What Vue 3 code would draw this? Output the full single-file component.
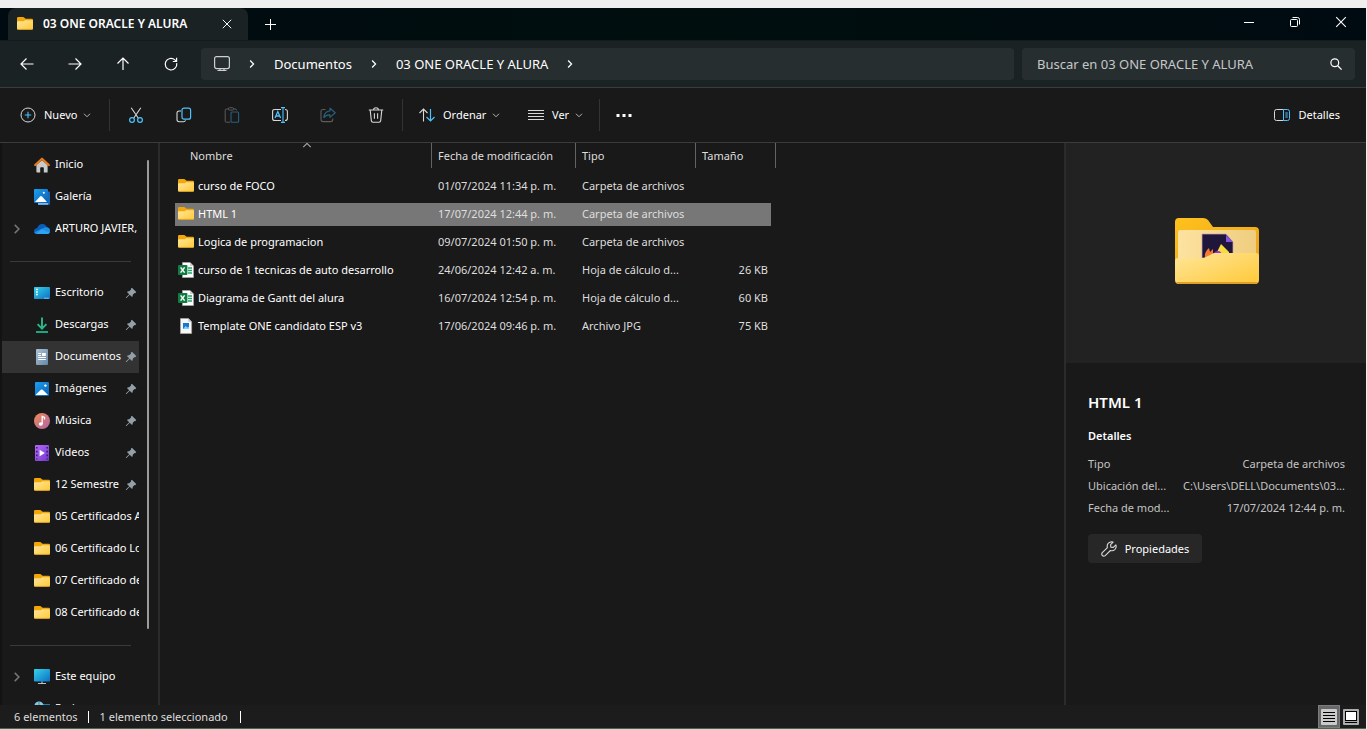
<script setup>
import { ref } from 'vue'

const folder =
  '<path d="M0 2.200Q0 1 1.200 1H6Q6.800 1 7.400 1.700L8.600 2.800H14.800Q16 2.800 16 4V8.500H0Z" fill="#f2a60b"/>' +
  '<path d="M0 6Q0 5.200.8 5.200H6.200Q6.900 5.200 7.400 4.700L8 4.300H15.200Q16 4.300 16 5.100V12.600Q16 13.700 14.900 13.700H1.100Q0 13.700 0 12.600Z" fill="url(#gFolder)"/>' +
  '<path d="M.4 13.400H15.600" stroke="#d79a1c" stroke-width=".8"/>'

const picture = '<path d="M1.500 14 6.800 8.800Q7.800 8 8.700 8.800L14 14Z" fill="#fff"/><circle cx="11.400" cy="4.600" r="1.200" fill="#fff"/>'

const excel =
  '<path d="M4.500.5H12L15.500 4V15.500H4.500Z" fill="#fff" stroke="#a5a5a5" stroke-width=".8"/><path d="M12 .5V4H15.500Z" fill="#cfcfcf"/>' +
  '<path d="M10 6h4M10 8.500h4M10 11h4" stroke="#21a366" stroke-width="1.400"/>' +
  '<rect x="0" y="3" width="9.400" height="10" rx=".8" fill="#107c41"/><path d="M2.600 5.400 6.600 10.600M6.600 5.400 2.600 10.600" stroke="#fff" stroke-width="1.500"/>'

const icons = {
  folder,
  excel,
  home:
    '<path d="M2.4 8 8 3.2 13.6 8V15.6H9.8V11Q9.8 10.2 9 10.2H7Q6.2 10.2 6.2 11V15.6H3.2Q2.4 15.6 2.4 14.8Z" fill="#c9c9c9"/>' +
    '<path d="M1.2 8 8 1.700 14.8 8" fill="none" stroke="#e8791c" stroke-width="2.200" stroke-linecap="round" stroke-linejoin="round"/>',
  gallery:
    '<path d="M14 2.5H15.4Q16 2.5 16 3.4V14.4Q16 16 14.4 16H4V14H14Z" fill="#1767b5"/><path d="M4 14H14V15.8H4Z" fill="#7cb5e6"/>' +
    '<rect width="14" height="14" rx="1" fill="url(#gBlue)"/><path d="M1 13 6 7.4Q7 6.6 8 7.4L13 13Z" fill="#fff"/><circle cx="9.8" cy="3.8" r="1" fill="#fff"/>',
  cloud:
    '<path d="M3 7.3Q4.6 3 8.4 3 11.4 3 12.9 6.3 16 7 16 10 16 13 13 13H3.2Q0 13 0 10 0 7.8 3 7.3Z" fill="#0a5eb8"/>' +
    '<path d="M.2 11.2 8.5 7.4Q10.5 6.4 12.9 6.3 16 7 16 10 16 13 13 13H3.2Q.8 13 .2 11.2Z" fill="#1f8fe6"/>' +
    '<path d="M2.2 12.9 7.4 8.3 15.6 11.6Q14.8 13 13 13Z" fill="#2ba5f4"/>',
  desktop:
    '<rect y="2" width="16" height="12" rx=".8" fill="url(#gCyan)"/><path d="M2 4.6h1.8M2 7.1h1.8M2 9.6h1.8" stroke="#fff" stroke-width="1.5"/><path d="M10.5 13.2h4.6" stroke="#d9edff" stroke-width="1" stroke-dasharray="1.2 .8"/>',
  download:
    '<path d="M8 .5V11M3.6 7.2 8 11.6 12.4 7.2" fill="none" stroke="#2ab98a" stroke-width="1.9"/><path d="M2 15h12" stroke="#17b890" stroke-width="1.8"/>',
  document:
    '<rect x="2" width="12" height="16" rx="1" fill="url(#gDoc)"/><path d="M4.2 4.5H7M4.2 6.5H7M4.2 8.5H11.8M4.2 10.500H11.800" stroke="#fff" stroke-width="1.100"/><rect x="8" y="4" width="3.8" height="3" fill="#fff"/>',
  image: '<rect x="1" y="1" width="14" height="14" rx="1" fill="url(#gBlue)"/>' + picture,
  music:
    '<circle cx="8" cy="8" r="8" fill="url(#gMusic)"/><ellipse cx="6.8" cy="11" rx="2" ry="1.8" fill="#fff"/><path d="M8.200 11V3.500L10.500 4.500V6.500" fill="none" stroke="#fff" stroke-width="1.300"/>',
  video:
    '<rect x="1" width="14" height="16" rx="1" fill="url(#gVideo)"/><path d="M2.8 2v12.6M13.2 2v12.6" stroke="#40197c" stroke-width="1.6" stroke-dasharray="1.6 2.2"/><path d="M5.6 4.8V11.2L10.8 8Z" fill="#fff"/>',
  computer:
    '<rect y="0" width="16" height="12.500" rx=".8" fill="url(#gCyan)"/><path d="M8 12.500v2M4 14.500h8" stroke="#b8c4cc" stroke-width="1.200"/>',
  network:
    '<rect x="3" y="3" width="13" height="10" fill="#1b7fb8"/><circle cx="5" cy="5" r="4.6" fill="#8cc8de"/><path d="M1 4.6h8M5 .5v9" stroke="#3a88ad"/>',
  jpg:
    '<path d="M2.5.5H10.4L13.6 3.8V15.5H2.5Z" fill="#f7f7f7" stroke="#a5a5a5" stroke-width=".8"/><path d="M10.4.5V3.8H13.6Z" fill="#c5c5c5"/><rect x="5" y="5" width="6" height="6" fill="#1976d2"/><path d="M5 11 7.6 8 9.4 9.6 11 8.8V11Z" fill="#7fd0f5"/>',
  pin: '<path d="M9.2 1 15 6.8 13.6 8.2 12.8 7.9 10.3 10.4Q10.6 12 9.4 13.4L6.3 10.3 2 14.6 1 14.8 1.4 13.8 5.6 9.6 2.6 6.6Q4 5.4 5.6 5.7L8.1 3.2 7.8 2.4Z" fill="#94a0a8"/>',
  chevron: '<path d="M5 2.500 10.500 8 5 13.500" fill="none" stroke="currentColor" stroke-width="2"/>',
  down: '<path d="M2 5.500 8 11.500 14 5.500" fill="none" stroke="currentColor" stroke-width="2"/>',
  up: '<path d="M2 11.500 8 5.500 14 11.500" fill="none" stroke="currentColor" stroke-width="1.800"/>',
  back: '<path d="M14.5 8H2M7.5 2.5 2 8 7.5 13.5" fill="none" stroke="currentColor" stroke-width="1.2"/>',
  forward: '<path d="M1.5 8H14M8.5 2.5 14 8 8.5 13.5" fill="none" stroke="currentColor" stroke-width="1.2"/>',
  upward: '<path d="M8 14V2M2.5 7.5 8 2 13.5 7.5" fill="none" stroke="currentColor" stroke-width="1.2"/>',
  refresh: '<path d="M13.7 7.2A5.8 5.8 0 1 1 11.9 3.9L13.5 5.4M13.6 1.8V5.5H9.8" fill="none" stroke="currentColor" stroke-width="1.2"/>',
  monitor: '<rect x=".6" y=".6" width="14.800" height="12" rx="2" fill="none" stroke="currentColor" stroke-width="1.200"/><path d="M6 12.500V14.500M10 12.500V14.500M3.500 14.500H12.500" stroke="currentColor" stroke-width="1.200"/>',
  close: '<path d="M3.2 3.2 12.8 12.8M12.8 3.2 3.2 12.8" stroke="currentColor" stroke-width="1.1"/>',
  plus: '<path d="M8.500 3V14M3 8.500H14" stroke="currentColor"/>',
  minimize: '<path d="M3 8.5H13" stroke="currentColor"/>',
  restore: '<rect x="3.5" y="5.5" width="7" height="7" rx="1" fill="none" stroke="currentColor"/><path d="M5.5 3.5H10.5Q12.5 3.5 12.5 5.5V10.5" fill="none" stroke="currentColor"/>',
  search: '<circle cx="6.8" cy="6.8" r="3.9" fill="none" stroke="currentColor" stroke-width="1.2"/><path d="M9.7 9.7 13.6 13.6" stroke="currentColor" stroke-width="1.3"/>',
  add: '<circle cx="8" cy="8" r="7" fill="none" stroke="#d8d8d8"/><path d="M8 4.8V11.2M4.8 8H11.2" stroke="#4cc2ff" stroke-width="1.1"/>',
  cut: '<path d="M3.2.8 10.2 11M12.8.8 5.8 11" stroke="#d8d8d8" stroke-width="1.1"/><circle cx="4" cy="13" r="2.4" fill="none" stroke="#4cc2ff" stroke-width="1.2"/><circle cx="12" cy="13" r="2.4" fill="none" stroke="#4cc2ff" stroke-width="1.2"/>',
  copy: '<path d="M5 4H3.2Q1 4 1 6.2V12.6Q1 14.8 3.2 14.8H7.4Q9 14.8 9.6 13.4" fill="none" stroke="#d8d8d8" stroke-width="1.1"/><rect x="6" y="1.2" width="8.6" height="11" rx="2" fill="none" stroke="#4cc2ff" stroke-width="1.2"/>',
  paste: '<path d="M4.5 2H2.4Q1.2 2 1.2 3.2V14Q1.2 15.2 2.4 15.2H6M9.5 2H11.4Q12.6 2 12.6 3.4" fill="none" stroke="#5c5c5c"/><rect x="4.4" y=".7" width="5.2" height="2.4" rx="1.2" fill="none" stroke="#5c5c5c"/><rect x="7" y="5" width="7.6" height="10.2" rx="1" fill="none" stroke="#28607c" stroke-width="1.1"/>',
  rename: '<path d="M9 2.5H2.6Q.6 2.5 .6 4.5V11.5Q.6 13.5 2.6 13.5H9M13 2.5Q15.4 2.5 15.4 4.5V11.5Q15.4 13.5 13 13.5" fill="none" stroke="#d8d8d8" stroke-width="1.1"/><path d="M3 11 5.8 4.6 8.6 11M4 9H7.6" fill="none" stroke="#4cc2ff" stroke-width="1.3"/><path d="M9 .6H13M11 .6V15.4M9 15.4H13" stroke="#4cc2ff" stroke-width="1.1"/>',
  share: '<path d="M5.5 2.5H3Q1 2.5 1 4.5V12.6Q1 14.6 3 14.6H10.8Q12.8 14.6 12.8 12.6V11.5" fill="none" stroke="#5c5c5c" stroke-width="1.1"/><path d="M10 1.2 15.2 5.8 10 10.4V7.8Q6 7.6 3.8 10.6 4.4 4.4 10 3.8Z" fill="none" stroke="#28607c" stroke-width="1.2" stroke-linejoin="round"/>',
  trash: '<path d="M.8 3H15.2M5.6 3Q5.6 .8 8 .8 10.4 .8 10.4 3M2.2 3 3.3 13.6Q3.5 15.2 5 15.2H11Q12.5 15.2 12.7 13.6L13.8 3M6.4 6.3V11.7M9.6 6.3V11.7" fill="none" stroke="#d8d8d8" stroke-width="1.1"/>',
  sort: '<path d="M4.5 14.5V2M.5 6 4.5 2 8.5 6" fill="none" stroke="#d8d8d8" stroke-width="1.1"/><path d="M11.5 2V14M7.5 10 11.5 14 15.5 10" fill="none" stroke="#4cc2ff" stroke-width="1.2"/>',
  lines: '<path d="M0 3.5H16M0 6.5H16M0 9.5H16M0 12.5H16" stroke="#d8d8d8"/>',
  dots: '<path d="M.5 7h3v3h-3zM6.500 7h3v3h-3zM12.500 7h3v3h-3z" fill="#fff"/>',
  pane: '<path d="M9.5 2.5H2.5Q.5 2.5 .5 4.5V11.5Q.5 13.5 2.5 13.5H9.5" fill="none" stroke="#d8d8d8"/><path d="M9.5 2.5H13.5Q15.5 2.5 15.5 4.5V11.5Q15.5 13.5 13.5 13.5H9.5ZM11.3 6H13.8M11.3 8H13.8M11.3 10H13.8" fill="none" stroke="#4cc2ff"/>',
  wrench: '<path d="M14.9 3.9 12.4 6.4 9.8 6.2 9.6 3.6 12.1 1.1Q9.4.2 7.4 2.2 5.6 4.2 6.4 6.6L1.3 11.7Q.2 13 1.3 14.5 2.8 15.8 4.2 14.6L9.4 9.5Q11.8 10.4 13.8 8.6 15.8 6.6 14.9 3.9Z" fill="none" stroke="#d8d8d8" stroke-width="1.1" stroke-linejoin="round"/>',
  viewList: '<rect width="16" height="16" rx="1" fill="#c8cacb"/><path d="M2 3.5H14M2 6.5H14M2 9.5H14M2 12.5H14" stroke="#000"/>',
  viewLarge: '<rect width="16" height="16" rx="1" fill="#adadad"/><rect x="2.5" y="2.5" width="11" height="9" fill="#fff" stroke="#000"/><path d="M2 13.5H14" stroke="#000"/>',
}

const selectedRow = ref('HTML 1')

const sidebar = [
  { icon: 'home', label: 'Inicio' },
  { icon: 'gallery', label: 'Galería' },
  { icon: 'cloud', label: 'ARTURO JAVIER, Personal', expand: true },
  { divider: true },
  { icon: 'desktop', label: 'Escritorio', pin: true },
  { icon: 'download', label: 'Descargas', pin: true },
  { icon: 'document', label: 'Documentos', pin: true, active: true },
  { icon: 'image', label: 'Imágenes', pin: true },
  { icon: 'music', label: 'Música', pin: true },
  { icon: 'video', label: 'Videos', pin: true },
  { icon: 'folder', label: '12 Semestre', pin: true },
  { icon: 'folder', label: '05 Certificados Alura' },
  { icon: 'folder', label: '06 Certificado Logica' },
  { icon: 'folder', label: '07 Certificado de' },
  { icon: 'folder', label: '08 Certificado de' },
  { divider: true },
  { icon: 'computer', label: 'Este equipo', expand: true },
  { icon: 'network', label: 'Red' },
]

const files = [
  { icon: 'folder', name: 'curso de FOCO', date: '01/07/2024 11:34 p. m.', type: 'Carpeta de archivos', size: '' },
  { icon: 'folder', name: 'HTML 1', date: '17/07/2024 12:44 p. m.', type: 'Carpeta de archivos', size: '' },
  { icon: 'folder', name: 'Logica de programacion', date: '09/07/2024 01:50 p. m.', type: 'Carpeta de archivos', size: '' },
  { icon: 'excel', name: 'curso de 1 tecnicas de auto desarrollo', date: '24/06/2024 12:42 a. m.', type: 'Hoja de cálculo d...', size: '26 KB' },
  { icon: 'excel', name: 'Diagrama de Gantt del alura', date: '16/07/2024 12:54 p. m.', type: 'Hoja de cálculo d...', size: '60 KB' },
  { icon: 'jpg', name: 'Template ONE candidato ESP v3', date: '17/06/2024 09:46 p. m.', type: 'Archivo JPG', size: '75 KB' },
]

const navButtons = [
  { icon: 'back', label: 'Atrás' },
  { icon: 'forward', label: 'Adelante' },
  { icon: 'upward', label: 'Subir' },
  { icon: 'refresh', label: 'Actualizar' },
]

const tools = [
  { icon: 'cut', label: 'Cortar' },
  { icon: 'copy', label: 'Copiar' },
  { icon: 'paste', label: 'Pegar' },
  { icon: 'rename', label: 'Cambiar nombre' },
  { icon: 'share', label: 'Compartir' },
  { icon: 'trash', label: 'Eliminar' },
]

const details = [
  { label: 'Tipo', value: 'Carpeta de archivos' },
  { label: 'Ubicación del...', value: 'C:\\Users\\DELL\\Documents\\03...' },
  { label: 'Fecha de mod...', value: '17/07/2024 12:44 p. m.' },
]
</script>

<template>
  <div class="screen">
    <svg class="defs" aria-hidden="true">
      <defs>
        <linearGradient id="gFolder" x1="0" y1="0" x2="1" y2="1"><stop offset="0" stop-color="#ffe69a" /><stop offset="1" stop-color="#ffc938" /></linearGradient>
        <linearGradient id="gBlue" x1="0" y1="0" x2="1" y2="1"><stop offset="0" stop-color="#1da0ee" /><stop offset="1" stop-color="#0a5fb8" /></linearGradient>
        <linearGradient id="gCyan" x1="0" y1="0" x2="1" y2="1"><stop offset="0" stop-color="#35d3e6" /><stop offset="1" stop-color="#0b6fc8" /></linearGradient>
        <linearGradient id="gDoc" x1="0" y1="0" x2="1" y2="1"><stop offset="0" stop-color="#adc4d6" /><stop offset="1" stop-color="#6487a5" /></linearGradient>
        <linearGradient id="gMusic" x1="0" y1="0" x2="1" y2="1"><stop offset="0" stop-color="#f08b55" /><stop offset="1" stop-color="#b063a8" /></linearGradient>
        <linearGradient id="gVideo" x1="0" y1="0" x2="1" y2="1"><stop offset="0" stop-color="#b36cf5" /><stop offset="1" stop-color="#7436d0" /></linearGradient>
        <linearGradient id="gBack" x1="0" y1="0" x2="1" y2="1"><stop offset="0" stop-color="#ffc21c" /><stop offset="1" stop-color="#e9a11c" /></linearGradient>
        <linearGradient id="gPaper" x1="0" y1="0" x2="1" y2="0"><stop offset="0" stop-color="#fde2a0" /><stop offset="1" stop-color="#efcd80" /></linearGradient>
      </defs>
    </svg>

    <div class="window">
      <header class="tabs">
        <div class="tab">
          <svg class="i16" viewBox="0 0 16 16" v-html="icons.folder" />
          <span class="tab-title">03 ONE ORACLE Y ALURA</span>
          <button class="tab-close" aria-label="Cerrar pestaña"><svg class="i14" viewBox="0 0 16 16" v-html="icons.close" /></button>
        </div>
        <button class="new-tab" aria-label="Nueva pestaña"><svg class="i16" viewBox="0 0 16 16" v-html="icons.plus" /></button>
        <div class="win-controls">
          <button aria-label="Minimizar"><svg class="i16" viewBox="0 0 16 16" v-html="icons.minimize" /></button>
          <button aria-label="Restaurar"><svg class="i16" viewBox="0 0 16 16" v-html="icons.restore" /></button>
          <button aria-label="Cerrar"><svg class="i16" viewBox="0 0 16 16" v-html="icons.close" /></button>
        </div>
      </header>

      <nav class="navbar" aria-label="Navegación">
        <div class="nav-buttons">
          <button v-for="b in navButtons" :key="b.icon" :aria-label="b.label"><svg class="i16" viewBox="0 0 16 16" v-html="icons[b.icon]" /></button>
        </div>
        <div class="address">
          <svg class="i16 mon" viewBox="0 0 16 16" v-html="icons.monitor" />
          <svg class="i10" viewBox="0 0 16 16" v-html="icons.chevron" />
          <a class="crumb" href="#">Documentos</a>
          <svg class="i10" viewBox="0 0 16 16" v-html="icons.chevron" />
          <a class="crumb" href="#">03 ONE ORACLE Y ALURA</a>
          <svg class="i10" viewBox="0 0 16 16" v-html="icons.chevron" />
        </div>
        <div class="search">
          <input type="text" aria-label="Buscar" placeholder="Buscar en 03 ONE ORACLE Y ALURA" />
          <button aria-label="Iniciar búsqueda"><svg class="i16" viewBox="0 0 16 16" v-html="icons.search" /></button>
        </div>
      </nav>

      <div class="toolbar" role="toolbar" aria-label="Comandos">
        <button class="cmd new"><svg class="i16" viewBox="0 0 16 16" v-html="icons.add" /><span>Nuevo</span><svg class="i8" viewBox="0 0 16 16" v-html="icons.down" /></button>
        <i class="sep"></i>
        <div class="tool-group">
          <button v-for="t in tools" :key="t.icon" class="tool" :aria-label="t.label"><svg class="i16" viewBox="0 0 16 16" v-html="icons[t.icon]" /></button>
        </div>
        <i class="sep"></i>
        <button class="cmd order"><svg class="i16" viewBox="0 0 16 16" v-html="icons.sort" /><span>Ordenar</span><svg class="i8" viewBox="0 0 16 16" v-html="icons.down" /></button>
        <button class="cmd view"><svg class="i16" viewBox="0 0 16 16" v-html="icons.lines" /><span>Ver</span><svg class="i8" viewBox="0 0 16 16" v-html="icons.down" /></button>
        <i class="sep"></i>
        <button class="tool" aria-label="Ver más"><svg class="i16" viewBox="0 0 16 16" v-html="icons.dots" /></button>
        <button class="cmd detail-toggle"><svg class="i16" viewBox="0 0 16 16" v-html="icons.pane" /><span>Detalles</span></button>
      </div>

      <div class="body">
        <aside class="sidebar">
          <ul>
            <li v-for="(s, n) in sidebar" :key="n">
              <hr v-if="s.divider" />
              <a v-else href="#" class="place" :class="{ active: s.active }">
                <span class="expander"><svg v-if="s.expand" class="i12" viewBox="0 0 16 16" v-html="icons.chevron" /></span>
                <svg class="i16" viewBox="0 0 16 16" v-html="icons[s.icon]" />
                <span class="place-name">{{ s.label }}</span>
                <svg v-if="s.pin" class="i12 pin" viewBox="0 0 16 16" v-html="icons.pin" />
              </a>
            </li>
          </ul>
          <div class="scroll"></div>
        </aside>

        <main class="files">
          <table>
            <colgroup><col class="w-name" /><col class="w-date" /><col class="w-type" /><col class="w-size" /></colgroup>
            <thead>
              <tr>
                <th class="name-head">Nombre<svg class="i10 sort-mark" viewBox="0 0 16 16" v-html="icons.up" /></th>
                <th>Fecha de modificación</th>
                <th>Tipo</th>
                <th>Tamaño</th>
              </tr>
            </thead>
            <tbody>
              <tr v-for="f in files" :key="f.name" :class="{ selected: f.name === selectedRow }" @click="selectedRow = f.name">
                <td><div class="file-name"><svg class="i16" viewBox="0 0 16 16" v-html="icons[f.icon]" /><span>{{ f.name }}</span></div></td>
                <td>{{ f.date }}</td>
                <td>{{ f.type }}</td>
                <td class="size">{{ f.size }}</td>
              </tr>
            </tbody>
          </table>
        </main>

        <section class="details">
          <div class="preview">
            <svg width="84" height="66" viewBox="0 0 84 66" role="img" aria-label="Carpeta">
              <path d="M0 4Q0 0 4 0H28Q31 0 33 2L38 9H80Q84 9 84 13V50H0Z" fill="url(#gBack)" />
              <path d="M3 14Q3 12 5 12H79Q81 12 81 14V44H3Z" fill="url(#gPaper)" />
              <path d="M27 16H51L58 24V44H27Z" fill="#20163c" stroke="#c6a6b4" stroke-width=".7" />
              <path d="M51 17V24H58Z" fill="#8355e0" />
              <path d="M30 40Q29 34 34 30L35 34 38 31V40Z" fill="#f47b31" />
              <path d="M42 34 46 26 54 34V38H44Z" fill="#f7dc3e" />
              <path d="M37 40Q38 33 43 33 47 33 48 40Z" fill="#9a2fd8" />
              <path d="M0 43Q0 40 3 40H26Q30 40 33 38L37 36Q38 35 40 35H81Q84 35 84 38V62Q84 66 80 66H4Q0 66 0 62Z" fill="url(#gFolder)" />
              <path d="M1 64H83Q82 66 80 66H4Q2 66 1 64Z" fill="#dfa02a" />
            </svg>
          </div>
          <div class="info">
            <h2>HTML 1</h2>
            <h3>Detalles</h3>
            <dl>
              <div v-for="d in details" :key="d.label"><dt>{{ d.label }}</dt><dd>{{ d.value }}</dd></div>
            </dl>
            <button class="props"><svg class="i16" viewBox="0 0 16 16" v-html="icons.wrench" /><span>Propiedades</span></button>
          </div>
        </section>
      </div>

      <footer class="status">
        <span class="count">6 elementos</span>
        <span class="picked">1 elemento seleccionado</span>
        <div class="views">
          <button class="on" aria-label="Vista de detalles"><svg class="i16" viewBox="0 0 16 16" v-html="icons.viewList" /></button>
          <button aria-label="Miniaturas grandes"><svg class="i16" viewBox="0 0 16 16" v-html="icons.viewLarge" /></button>
        </div>
      </footer>
    </div>
  </div>
</template>

<style>
body { margin: 0; background: #191919; }
</style>

<style scoped>
* { box-sizing: border-box; }
.screen { height: 100vh; padding: 8px 1px 0 0; background: #efefef; font: 11px/16px "Noto Sans", "Open Sans", sans-serif; color: #fff; }
.defs { position: absolute; width: 0; height: 0; }
.window { height: 100%; display: flex; flex-direction: column; background: #191919; border-bottom: 1px solid #2f7350; }
svg { display: block; flex: none; }
.i8 { width: 8px; height: 8px; }
.i10 { width: 10px; height: 10px; }
.i12 { width: 12px; height: 12px; }
.i14 { width: 14px; height: 14px; }
.i16 { width: 16px; height: 16px; }
button { display: flex; align-items: center; justify-content: center; padding: 0; border: 0; background: none; color: inherit; font: inherit; }
a { color: inherit; text-decoration: none; }

.tabs { flex: none; display: flex; height: 32px; padding-left: 8px; background: linear-gradient(90deg, #000b11, #000e0e 50%, #000b11); }
.tab { display: flex; align-items: center; width: 240px; padding: 0 14px 0 9px; border-radius: 8px 8px 0 0; background: #1b2224; }
.tab-title { flex: 1; padding-left: 10px; font-size: 12px; font-weight: 600; white-space: nowrap; }
.new-tab { width: 44px; }
.win-controls { display: flex; margin-left: auto; padding-right: 2px; }
.win-controls button { width: 46px; height: 28px; }

.navbar { flex: none; display: flex; align-items: center; height: 48px; padding: 0 11px 0 3px; background: #1b2224; border-top: 1px solid #151b1c; border-bottom: 1px solid #3b3b3b; }
.nav-buttons { display: flex; width: 198px; }
.nav-buttons button { width: 48px; height: 32px; }
.address { flex: 1; display: flex; align-items: center; gap: 17px; height: 32px; padding-left: 13px; border-radius: 4px; background: #272e30; font-size: 13px; }
.mon { color: #cfcfcf; }
.crumb { white-space: nowrap; }
.search { display: flex; width: 333px; height: 32px; margin-left: 8px; border-radius: 4px; background: #272e30; }
.search input { flex: 1; min-width: 0; padding: 0 0 0 15px; border: 0; outline: 0; background: none; color: #fff; font: inherit; font-size: 13px; }
.search input::placeholder { color: #c6c8c8; opacity: 1; }
.search button { width: 38px; }

.toolbar { flex: none; display: flex; align-items: center; height: 55px; padding-left: 20px; border-bottom: 1px solid #3b3b3b; }
.sep { width: 1px; height: 32px; background: #333; }
.cmd { justify-content: flex-start; gap: 8px; height: 32px; }
.cmd .i8 { margin-left: -2px; color: #b5b5b5; }
.new { width: 89px; }
.order { width: 109px; margin-left: 16px; }
.view { width: 71px; }
.tool-group { display: flex; padding: 0 2px; }
.tool { width: 48px; height: 32px; }
.detail-toggle { margin: 0 26px 0 auto; }

.body { flex: 1; min-height: 0; display: flex; overflow: hidden; }
.sidebar { flex: none; display: flex; justify-content: space-between; width: 160px; overflow: hidden; border-right: 2px solid #2b2b2b; border-left: 2px solid #131313; }
.sidebar ul { width: 137px; margin: 0; padding: 6px 0 0; list-style: none; }
.sidebar li { height: 32px; }
.sidebar li:has(hr) { padding: 16px 8px 0; }
.sidebar hr { margin: 0; border: 0; border-top: 1px solid #3a3a3a; }
.place { display: flex; align-items: center; height: 32px; overflow: hidden; white-space: nowrap; }
.active { background: #333; }
.expander { display: flex; flex: none; width: 32px; padding-left: 9px; color: #777; }
.place-name { flex: 1; min-width: 0; margin-left: 5px; padding-bottom: 2px; overflow: hidden; }
.pin { margin-right: 2px; }
.scroll { width: 2px; height: 469px; margin: 17px 9px 0 0; border-radius: 1px; background: #9b9b9b; }

.files { flex: 1; min-width: 0; padding-left: 15px; }
table { width: 601px; table-layout: fixed; border-collapse: separate; border-spacing: 0; }
.w-name { width: 257px; }
.w-date { width: 144px; }
.w-type { width: 120px; }
.w-size { width: 80px; }
th { height: 25px; padding: 0 0 0 6px; border-right: 1px solid #636363; text-align: left; font-weight: 400; color: #dedede; white-space: nowrap; }
.name-head { position: relative; padding-left: 15px; }
.sort-mark { position: absolute; top: -3px; left: 127px; color: #aaa; }
tbody::before { content: ""; display: block; height: 4px; }
td { height: 28px; padding: 0 0 0 6px; color: #dedede; white-space: nowrap; }
td:first-child { padding-left: 3px; color: #fff; }
td.size { padding-right: 8px; text-align: right; }
.file-name { display: flex; align-items: center; gap: 4px; }
.selected td { background: linear-gradient(#777, #777) left center / 100% 23px no-repeat; }
.selected td.size { background-size: 75px 23px; }

.details { flex: none; width: 302px; border-left: 2px solid #2b2b2b; }
.preview { display: flex; align-items: center; justify-content: center; height: 220px; padding: 0 0 4px 2px; background: #222; }
.info { padding: 28px 21px 0 22px; }
h2 { margin: 0; font-size: 15px; line-height: 22px; font-weight: 600; }
h3 { margin: 15px 0 9px; font-size: 11px; line-height: 16px; font-weight: 600; }
dl { margin: 0; color: #c4c4c4; }
dl div { display: flex; justify-content: space-between; line-height: 22px; white-space: nowrap; }
dd { margin: 0; }
.props { width: 114px; height: 29px; gap: 8px; margin-top: 15px; border-radius: 4px; background: #272727; }

.status { flex: none; display: flex; align-items: center; height: 23px; padding-left: 14px; background: #1c1c1c; color: #dedede; }
.status > span { line-height: 12px; border-right: 1px solid #fff; }
.count { padding-right: 10px; }
.picked { padding: 0 12px 0 11px; }
.views { display: flex; align-self: stretch; margin-left: auto; padding-right: 4px; }
.views button { width: 22px; border: 1px solid transparent; }
.views .on { background: #686868; border-color: #7c7c7c; }
</style>
